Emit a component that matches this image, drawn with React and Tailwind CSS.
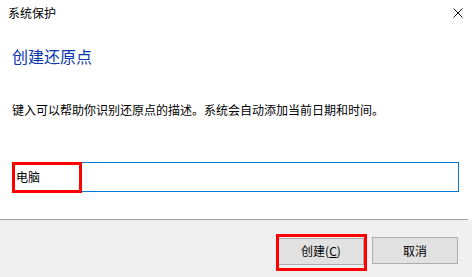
import React from 'react';

const font = { fontFamily: '"Noto Sans CJK SC", "Noto Sans", sans-serif' };

export default function App() {
  return (
    <div className="w-[472px] h-[277px] flex flex-col bg-white text-[#000]" style={font}>
      {/* Title bar */}
      <div className="h-[26px] flex items-center justify-between pl-2 pr-[9px]">
        <span className="text-[12px] leading-[16px]">系统保护</span>
        <svg width="10" height="10" viewBox="0 0 10 10" className="mb-[1px]">
          <path d="M0.5 0.5 L9.5 9.5 M9.5 0.5 L0.5 9.5" stroke="#111" strokeWidth="1" />
        </svg>
      </div>

      {/* Content */}
      <div className="flex-1 flex flex-col px-3">
        <h1 className="mt-[20px] text-[16px] leading-[20px] text-[#0a35b0] font-normal">创建还原点</h1>
        <p className="mt-[36px] text-[12px] leading-[16px]">
          键入可以帮助你识别还原点的描述。系统会自动添加当前日期和时间。
        </p>
        <div className="relative mt-[44px] mr-[1px]">
          <div className="h-[30px] border border-[#0078d7] flex items-center px-[3px] text-[12px]">
            电脑
          </div>
          <div className="absolute left-0 top-0 w-[70px] h-[31px] border-[3px] border-[#f00]" />
        </div>
      </div>
      <div className="h-px bg-[#a0a0a0] mr-[4px]" />

      {/* Footer */}
      <div className="h-[57px] bg-[#f0f0f0] flex justify-end items-start gap-2 pt-[17px] pr-[14px]">
        <div className="relative">
          <button className="w-[86px] h-[27px] bg-[#e1e1e1] border border-[#adadad] text-[12px]">
            创建(<span className="underline">C</span>)
          </button>
          <div className="absolute left-[-2px] top-[-3px] w-[91px] h-[37px] border-[3px] border-[#f00]" />
        </div>
        <button className="w-[86px] h-[27px] bg-[#e1e1e1] border border-[#adadad] text-[12px]">
          取消
        </button>
      </div>
    </div>
  );
}
